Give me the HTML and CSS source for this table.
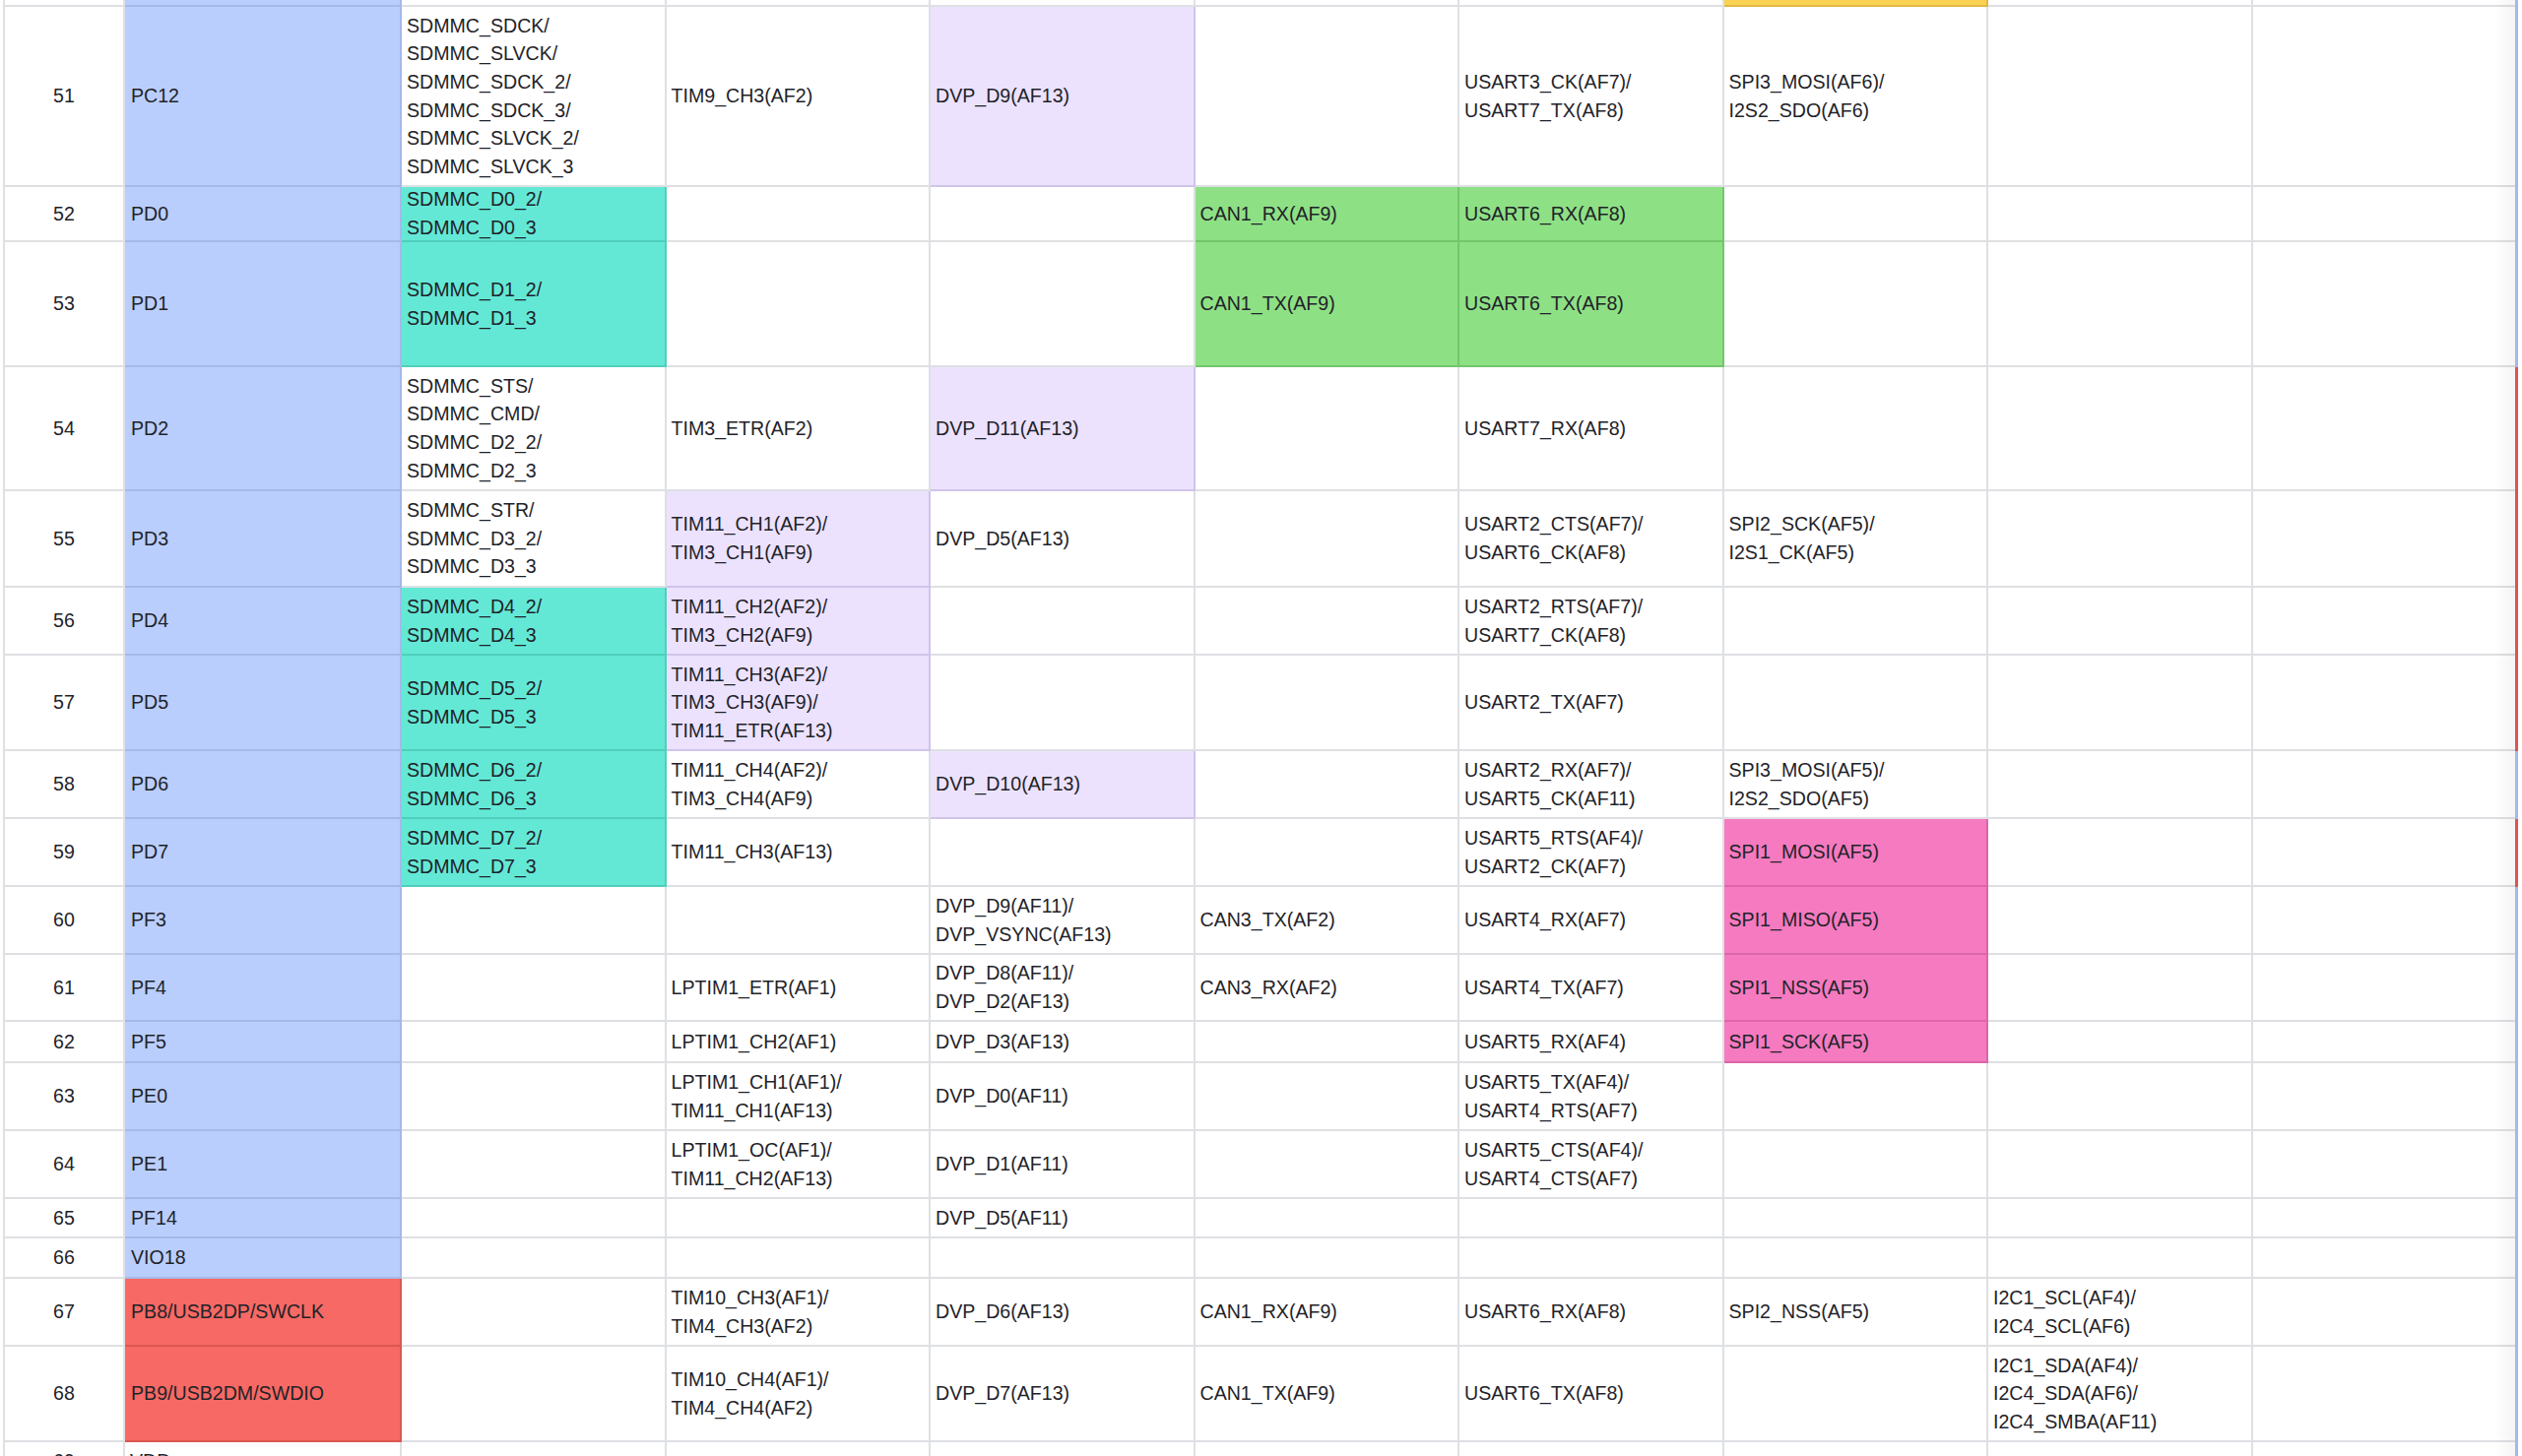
FILE: index.html
```html
<!DOCTYPE html>
<html lang="en">
<head>
<meta charset="utf-8">
<title>Pin table</title>
<link rel="stylesheet" href="styles.css">
</head>
<body>
<div class="sheet" role="table">
  <div class="row" role="row">
    <div class="c n"></div><div class="c blue"></div><div class="c"></div><div class="c"></div><div class="c"></div><div class="c"></div><div class="c"></div><div class="c yel"></div><div class="c"></div><div class="c last"></div><div class="e eb"></div>
  </div>
  <div class="row" role="row">
    <div class="c n">51</div><div class="c blue">PC12</div><div class="c">SDMMC_SDCK/<br>SDMMC_SLVCK/<br>SDMMC_SDCK_2/<br>SDMMC_SDCK_3/<br>SDMMC_SLVCK_2/<br>SDMMC_SLVCK_3</div><div class="c">TIM9_CH3(AF2)</div><div class="c lav">DVP_D9(AF13)</div><div class="c"></div><div class="c">USART3_CK(AF7)/<br>USART7_TX(AF8)</div><div class="c">SPI3_MOSI(AF6)/<br>I2S2_SDO(AF6)</div><div class="c"></div><div class="c last"></div><div class="e eb"></div>
  </div>
  <div class="row" role="row">
    <div class="c n">52</div><div class="c blue">PD0</div><div class="c teal">SDMMC_D0_2/<br>SDMMC_D0_3</div><div class="c"></div><div class="c"></div><div class="c green">CAN1_RX(AF9)</div><div class="c green">USART6_RX(AF8)</div><div class="c"></div><div class="c"></div><div class="c last"></div><div class="e eb"></div>
  </div>
  <div class="row" role="row">
    <div class="c n">53</div><div class="c blue">PD1</div><div class="c teal">SDMMC_D1_2/<br>SDMMC_D1_3</div><div class="c"></div><div class="c"></div><div class="c green">CAN1_TX(AF9)</div><div class="c green">USART6_TX(AF8)</div><div class="c"></div><div class="c"></div><div class="c last"></div><div class="e eb"></div>
  </div>
  <div class="row" role="row">
    <div class="c n">54</div><div class="c blue">PD2</div><div class="c">SDMMC_STS/<br>SDMMC_CMD/<br>SDMMC_D2_2/<br>SDMMC_D2_3</div><div class="c">TIM3_ETR(AF2)</div><div class="c lav">DVP_D11(AF13)</div><div class="c"></div><div class="c">USART7_RX(AF8)</div><div class="c"></div><div class="c"></div><div class="c last"></div><div class="e er"></div>
  </div>
  <div class="row" role="row">
    <div class="c n">55</div><div class="c blue">PD3</div><div class="c">SDMMC_STR/<br>SDMMC_D3_2/<br>SDMMC_D3_3</div><div class="c lav">TIM11_CH1(AF2)/<br>TIM3_CH1(AF9)</div><div class="c">DVP_D5(AF13)</div><div class="c"></div><div class="c">USART2_CTS(AF7)/<br>USART6_CK(AF8)</div><div class="c">SPI2_SCK(AF5)/<br>I2S1_CK(AF5)</div><div class="c"></div><div class="c last"></div><div class="e er"></div>
  </div>
  <div class="row" role="row">
    <div class="c n">56</div><div class="c blue">PD4</div><div class="c teal">SDMMC_D4_2/<br>SDMMC_D4_3</div><div class="c lav">TIM11_CH2(AF2)/<br>TIM3_CH2(AF9)</div><div class="c"></div><div class="c"></div><div class="c">USART2_RTS(AF7)/<br>USART7_CK(AF8)</div><div class="c"></div><div class="c"></div><div class="c last"></div><div class="e er"></div>
  </div>
  <div class="row" role="row">
    <div class="c n">57</div><div class="c blue">PD5</div><div class="c teal">SDMMC_D5_2/<br>SDMMC_D5_3</div><div class="c lav">TIM11_CH3(AF2)/<br>TIM3_CH3(AF9)/<br>TIM11_ETR(AF13)</div><div class="c"></div><div class="c"></div><div class="c">USART2_TX(AF7)</div><div class="c"></div><div class="c"></div><div class="c last"></div><div class="e er"></div>
  </div>
  <div class="row" role="row">
    <div class="c n">58</div><div class="c blue">PD6</div><div class="c teal">SDMMC_D6_2/<br>SDMMC_D6_3</div><div class="c">TIM11_CH4(AF2)/<br>TIM3_CH4(AF9)</div><div class="c lav">DVP_D10(AF13)</div><div class="c"></div><div class="c">USART2_RX(AF7)/<br>USART5_CK(AF11)</div><div class="c">SPI3_MOSI(AF5)/<br>I2S2_SDO(AF5)</div><div class="c"></div><div class="c last"></div><div class="e eb"></div>
  </div>
  <div class="row" role="row">
    <div class="c n">59</div><div class="c blue">PD7</div><div class="c teal">SDMMC_D7_2/<br>SDMMC_D7_3</div><div class="c">TIM11_CH3(AF13)</div><div class="c"></div><div class="c"></div><div class="c">USART5_RTS(AF4)/<br>USART2_CK(AF7)</div><div class="c pink">SPI1_MOSI(AF5)</div><div class="c"></div><div class="c last"></div><div class="e er"></div>
  </div>
  <div class="row" role="row">
    <div class="c n">60</div><div class="c blue">PF3</div><div class="c"></div><div class="c"></div><div class="c">DVP_D9(AF11)/<br>DVP_VSYNC(AF13)</div><div class="c">CAN3_TX(AF2)</div><div class="c">USART4_RX(AF7)</div><div class="c pink">SPI1_MISO(AF5)</div><div class="c"></div><div class="c last"></div><div class="e eb"></div>
  </div>
  <div class="row" role="row">
    <div class="c n">61</div><div class="c blue">PF4</div><div class="c"></div><div class="c">LPTIM1_ETR(AF1)</div><div class="c">DVP_D8(AF11)/<br>DVP_D2(AF13)</div><div class="c">CAN3_RX(AF2)</div><div class="c">USART4_TX(AF7)</div><div class="c pink">SPI1_NSS(AF5)</div><div class="c"></div><div class="c last"></div><div class="e eb"></div>
  </div>
  <div class="row" role="row">
    <div class="c n">62</div><div class="c blue">PF5</div><div class="c"></div><div class="c">LPTIM1_CH2(AF1)</div><div class="c">DVP_D3(AF13)</div><div class="c"></div><div class="c">USART5_RX(AF4)</div><div class="c pink">SPI1_SCK(AF5)</div><div class="c"></div><div class="c last"></div><div class="e eb"></div>
  </div>
  <div class="row" role="row">
    <div class="c n">63</div><div class="c blue">PE0</div><div class="c"></div><div class="c">LPTIM1_CH1(AF1)/<br>TIM11_CH1(AF13)</div><div class="c">DVP_D0(AF11)</div><div class="c"></div><div class="c">USART5_TX(AF4)/<br>USART4_RTS(AF7)</div><div class="c"></div><div class="c"></div><div class="c last"></div><div class="e eb"></div>
  </div>
  <div class="row" role="row">
    <div class="c n">64</div><div class="c blue">PE1</div><div class="c"></div><div class="c">LPTIM1_OC(AF1)/<br>TIM11_CH2(AF13)</div><div class="c">DVP_D1(AF11)</div><div class="c"></div><div class="c">USART5_CTS(AF4)/<br>USART4_CTS(AF7)</div><div class="c"></div><div class="c"></div><div class="c last"></div><div class="e eb"></div>
  </div>
  <div class="row" role="row">
    <div class="c n">65</div><div class="c blue">PF14</div><div class="c"></div><div class="c"></div><div class="c">DVP_D5(AF11)</div><div class="c"></div><div class="c"></div><div class="c"></div><div class="c"></div><div class="c last"></div><div class="e eb"></div>
  </div>
  <div class="row" role="row">
    <div class="c n">66</div><div class="c blue">VIO18</div><div class="c"></div><div class="c"></div><div class="c"></div><div class="c"></div><div class="c"></div><div class="c"></div><div class="c"></div><div class="c last"></div><div class="e eb"></div>
  </div>
  <div class="row" role="row">
    <div class="c n">67</div><div class="c red">PB8/USB2DP/SWCLK</div><div class="c"></div><div class="c">TIM10_CH3(AF1)/<br>TIM4_CH3(AF2)</div><div class="c">DVP_D6(AF13)</div><div class="c">CAN1_RX(AF9)</div><div class="c">USART6_RX(AF8)</div><div class="c">SPI2_NSS(AF5)</div><div class="c">I2C1_SCL(AF4)/<br>I2C4_SCL(AF6)</div><div class="c last"></div><div class="e eb"></div>
  </div>
  <div class="row" role="row">
    <div class="c n">68</div><div class="c red">PB9/USB2DM/SWDIO</div><div class="c"></div><div class="c">TIM10_CH4(AF1)/<br>TIM4_CH4(AF2)</div><div class="c">DVP_D7(AF13)</div><div class="c">CAN1_TX(AF9)</div><div class="c">USART6_TX(AF8)</div><div class="c"></div><div class="c">I2C1_SDA(AF4)/<br>I2C4_SDA(AF6)/<br>I2C4_SMBA(AF11)</div><div class="c last"></div><div class="e eb"></div>
  </div>
  <div class="row" role="row">
    <div class="c n">69</div><div class="c">VDD</div><div class="c"></div><div class="c"></div><div class="c"></div><div class="c"></div><div class="c"></div><div class="c"></div><div class="c"></div><div class="c last"></div><div class="e eb"></div>
  </div>
</div>
</body>
</html>
```

FILE: styles.css
```css
html, body {
  margin: 0;
  padding: 0;
  background: #ffffff;
  overflow: hidden;
}

body {
  font-family: "Liberation Sans", Arial, sans-serif;
  font-size: 19.6px;
  line-height: 28.6px;
  color: #1f2329;
}

.sheet {
  position: relative;
  display: grid;
  grid-template-columns: 122px 281px repeat(7, 268.5px) 266.5px 3px;
  grid-template-rows: 7px 183px 56px 127px 126px 98px 69px 97px 69px 69px 69px 68px 42px 69px 69px 40px 41px 69px 97px 41px;
  margin-left: 3px;
  border-left: 2px solid #dee0e3;
  width: max-content;
}

.sheet::after {
  content: "";
  position: absolute;
  top: 0;
  bottom: 0;
  right: 3px;
  width: 22px;
  background: linear-gradient(to right, rgba(0, 0, 0, 0), rgba(0, 0, 0, 0.045));
  pointer-events: none;
}

.row {
  display: contents;
}

.c {
  box-sizing: border-box;
  display: flex;
  align-items: center;
  padding: 0 5px;
  border-right: 2px solid #dee0e3;
  border-bottom: 2px solid #dee0e3;
  white-space: nowrap;
  min-width: 0;
}

.c.last {
  border-right: none;
}

.n {
  justify-content: center;
  padding: 0;
}

.blue {
  background: #bacefd;
  border-color: #a6b8ea;
  padding-left: 6px;
}

.teal {
  background: #64e8d6;
  border-color: #4fcfbb;
}

.green {
  background: #8ee085;
  border-color: #74c66b;
}

.lav {
  background: #ece2fe;
  border-color: #cfc4e9;
}

.pink {
  background: #f57ac0;
  border-color: #dc66a7;
}

.red {
  background: #f76964;
  border-color: #dc5651;
  padding-left: 6px;
}

.yel {
  background: #fad355;
  border-color: #e2b93f;
}

.e {
  box-sizing: border-box;
}

.eb {
  background: #a3b8ec;
}

.er {
  background: #e0534e;
}
```
